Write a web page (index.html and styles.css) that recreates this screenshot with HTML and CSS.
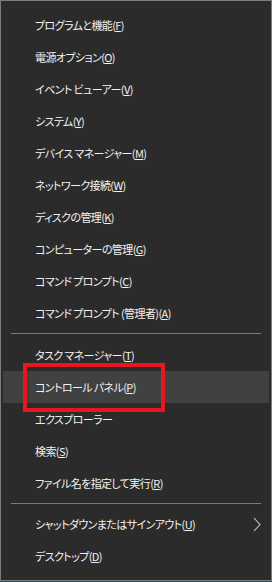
FILE: index.html
```html
<!DOCTYPE html>
<html>
<head>
    <title>Quick Link Menu</title>
    <link rel="stylesheet" href="styles.css">
</head>
<body>
    <!-- Win+X quick link menu -->
    <ul class="menu">
        <li class="item">プログラムと機能(<u>F</u>)</li>
        <li class="item">電源オプション(<u>O</u>)</li>
        <li class="item">イベント ビューアー(<u>V</u>)</li>
        <li class="item">システム(<u>Y</u>)</li>
        <li class="item">デバイス マネージャー(<u>M</u>)</li>
        <li class="item">ネットワーク接続(<u>W</u>)</li>
        <li class="item">ディスクの管理(<u>K</u>)</li>
        <li class="item">コンピューターの管理(<u>G</u>)</li>
        <li class="item">コマンド プロンプト(<u>C</u>)</li>
        <li class="item">コマンド プロンプト (管理者)(<u>A</u>)</li>
        <li class="sep"></li>
        <li class="item">タスク マネージャー(<u>T</u>)</li>
        <li class="item active">コントロール パネル(<u>P</u>)<span class="mark"></span></li>
        <li class="item">エクスプローラー</li>
        <li class="item">検索(<u>S</u>)</li>
        <li class="item">ファイル名を指定して実行(<u>R</u>)</li>
        <li class="sep sep-small"></li>
        <li class="item has-sub">
            <span>シャットダウンまたはサインアウト(<u>U</u>)</span>
            <svg class="chevron" width="8" height="15" viewBox="0 0 8 15">
                <polyline points="1,1 7,7.5 1,14" fill="none" stroke="#b9cde2" stroke-width="1.1"/>
            </svg>
        </li>
        <li class="item">デスクトップ(<u>D</u>)</li>
    </ul>
</body>
</html>
```

FILE: styles.css
```css
body {
    margin: 0;
    background-color: #2b4e60; /* taskbar peeking under the menu */
    font-family: 'Noto Sans CJK JP', 'Noto Sans', sans-serif;
}

.menu {
    list-style: none;
    margin: 0;
    padding: 8px 2px;
    width: 272px;
    height: 581px;
    box-sizing: border-box;
    background-color: #2b2b2b;
    border: 1px solid #7c7c7c;
}

.item {
    position: relative;
    height: 32px;
    line-height: 32px;
    padding: 0 8px 0 32px;
    color: #f2f2f2;
    font-size: 11px;
    letter-spacing: -0.6px; /* Meiryo UI is much narrower than Noto */
    font-feature-settings: "palt";
    white-space: nowrap;
}

.item u {
    text-underline-offset: 1px;
}

.has-sub {
    display: flex;
    align-items: center;
    justify-content: space-between;
}

.active {
    background-color: #414141;
}

/* red annotation box drawn over the highlighted row */
.mark {
    position: absolute;
    left: 20px;
    top: -8px;
    width: 142px;
    height: 49px;
    box-sizing: border-box;
    border: 4px solid #e8161f;
}

.sep {
    height: 1px;
    margin: 4px 8px 5px;
    background-color: #7a7a7a;
}

.sep-small {
    margin: 4px 8px 4px;
}

.chevron {
    display: block;
}
```
